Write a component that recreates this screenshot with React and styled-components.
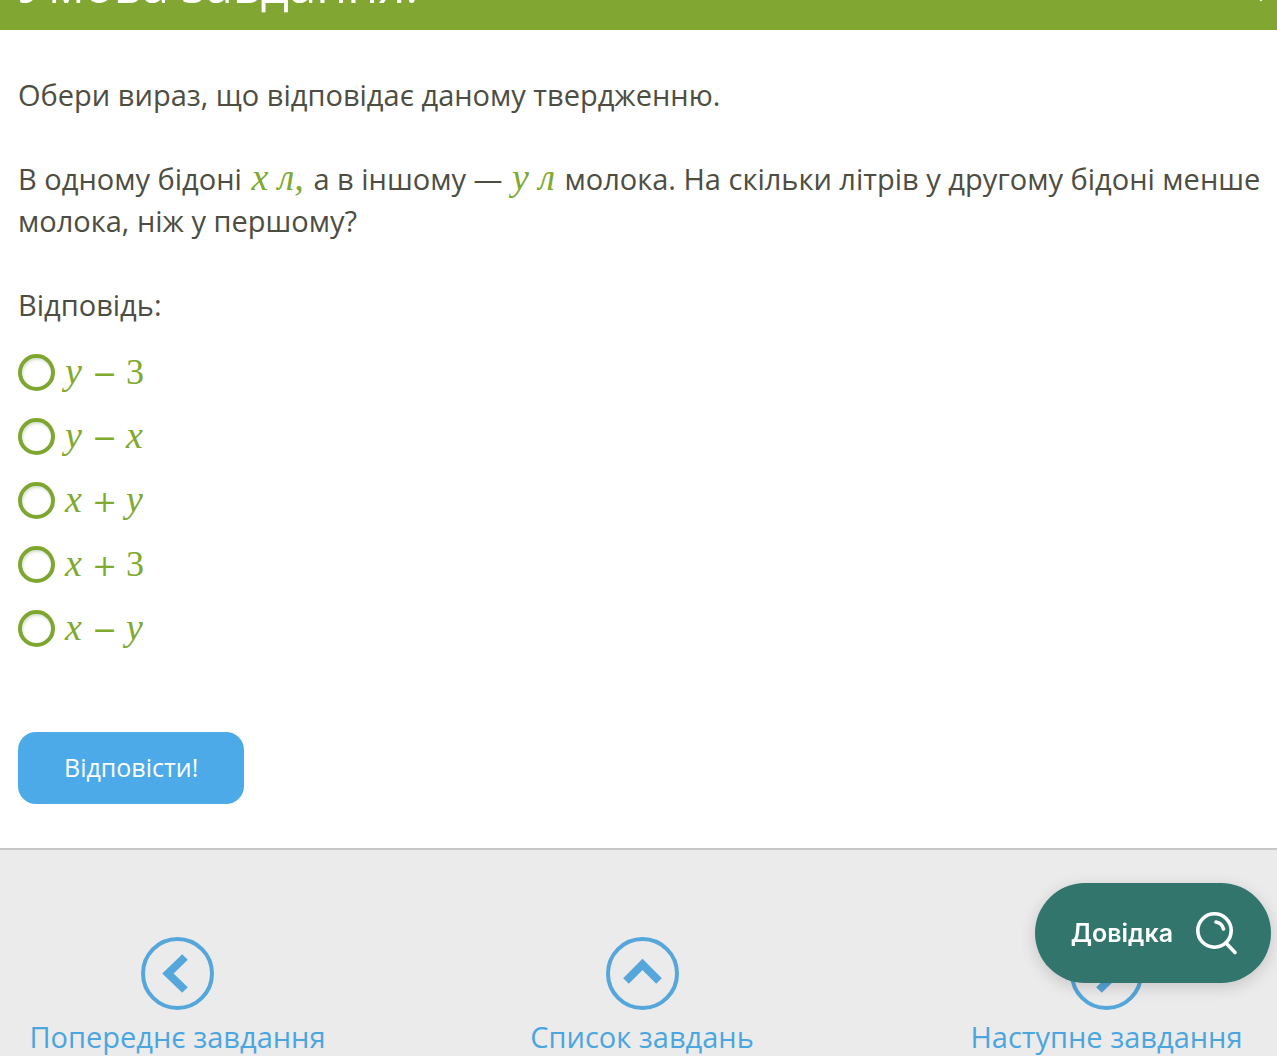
import React, { useState } from "react";
import styled, { createGlobalStyle } from "styled-components";

const ANSWERS = [
  ["y", "−", "3"],
  ["y", "−", "x"],
  ["x", "+", "y"],
  ["x", "+", "3"],
  ["x", "−", "y"],
];

const LINKS = [
  { text: "Попереднє завдання", points: "44,20 27,36.5 44,53" },
  { text: "Список завдань", points: "20,44 36.5,27.5 53,44" },
  { text: "Наступне завдання", points: "29,20 46,36.5 29,53" },
];

const App = () => {
  const [answer, setAnswer] = useState(null);

  return (
    <Page>
      <GlobalStyle />
      <Header>
        <h1>Умова завдання:</h1>
        <svg width="16" height="20" viewBox="0 0 16 20" aria-hidden="true">
          <path d="M2 2 L8 8 L14 2" fill="none" stroke="#fff" strokeWidth="2" />
        </svg>
      </Header>

      <Task>
        <p>Обери вираз, що відповідає даному твердженню.</p>
        <p>
          В одному бідоні <InlineFormula>x л,</InlineFormula> а в іншому —{" "}
          <InlineFormula>y л</InlineFormula> молока. На скільки літрів у
          другому бідоні менше молока, ніж у першому?
        </p>
        <p id="answers">Відповідь:</p>

        <Answers role="radiogroup" aria-labelledby="answers">
          {ANSWERS.map(([left, sign, right], i) => (
            <Answer key={i}>
              <Radio
                type="radio"
                name="answer"
                checked={answer === i}
                onChange={() => setAnswer(i)}
              />
              <Formula>
                {left}
                <Sign>{sign}</Sign>
                {right === "3" ? <Digit>{right}</Digit> : right}
              </Formula>
            </Answer>
          ))}
        </Answers>

        <Submit type="button">Відповісти!</Submit>
      </Task>

      <Footer>
        {LINKS.map(({ text, points }) => (
          <FooterLink href="#" key={text}>
            <svg width="73" height="73" viewBox="0 0 73 73" aria-hidden="true">
              <circle cx="36.5" cy="36.5" r="34.5" strokeWidth="4" />
              <polyline points={points} strokeWidth="8" />
            </svg>
            {text}
          </FooterLink>
        ))}
      </Footer>

      <Help type="button">
        Довідка
        <svg width="44" height="46" viewBox="0 0 44 46" aria-hidden="true">
          <circle cx="19.5" cy="20.5" r="16.7" />
          <path d="M31.5 33.5 L40 42.5 M21 12 Q27 13 28.5 19" />
        </svg>
      </Help>
    </Page>
  );
};

export default App;

const GlobalStyle = createGlobalStyle`
  * {
    box-sizing: border-box;
  }
  body {
    margin: 0;
    background: #fff;
    color: #4d4d42;
    font-family: "Open Sans", "Noto Sans", sans-serif;
    font-size: 29px;
    line-height: 42px;
  }
`;

const Page = styled.div`
  display: flex;
  flex-direction: column;
  min-height: 100vh;
`;
const Header = styled.header`
  display: flex;
  justify-content: space-between;
  align-items: flex-end;
  height: 30px;
  padding: 0 8px 18px 18px;
  overflow: hidden;
  background: #82a632;
  color: #fff;

  h1 {
    margin: 0;
    font-size: 49px;
    font-weight: 400;
    line-height: 56px;
  }
  svg {
    flex: none;
  }
`;
const Task = styled.main`
  flex: 1;
  padding: 44px 12px 44px 18px;

  p {
    margin: 0 0 42px;
  }
  #answers {
    margin-bottom: 14px;
  }
`;
const Formula = styled.span`
  color: #7fa92f;
  font-family: "Liberation Serif", serif;
  font-size: 38px;
  font-style: italic;
  line-height: 36px;
`;
const InlineFormula = styled(Formula)`
  margin: 0 2px;
`;
const Sign = styled.span`
  display: inline-block;
  width: 24px;
  margin: 0 10px;
  font-family: "DejaVu Serif", serif;
  font-size: 30px;
  font-style: normal;
  text-align: center;
`;
const Digit = styled.span`
  font-size: 36px;
  font-style: normal;
`;
const Answers = styled.div`
  display: flex;
  flex-direction: column;
  align-items: flex-start;
`;
const Answer = styled.label`
  display: flex;
  align-items: center;
  gap: 10px;
  height: 64px;
`;
const Radio = styled.input`
  appearance: none;
  width: 37px;
  height: 37px;
  margin: 0;
  border: 4px solid #7fa630;
  border-radius: 50%;
  background: #fff;
  box-shadow: inset 1px 2px 3px #d5e2d5;

  &:checked {
    background: #7fa630;
    box-shadow: inset 0 0 0 6px #fff;
  }
`;
const Submit = styled.button`
  display: block;
  height: 72px;
  margin-top: 72px;
  padding: 0 46px 2px;
  border: 0;
  border-radius: 18px;
  background: #4daae8;
  color: #fff;
  font-family: inherit;
  font-size: 25px;
`;
const Footer = styled.footer`
  display: flex;
  justify-content: space-between;
  padding: 87px 23px 1px 30px;
  border-top: 2px solid #c6c6c6;
  background: #ebebeb;
`;
const FooterLink = styled.a`
  display: flex;
  flex-direction: column;
  align-items: center;
  gap: 9px;
  width: 295px;
  color: #4ba6df;
  line-height: 36px;
  text-decoration: none;
  white-space: nowrap;

  svg {
    fill: none;
    stroke: #55a6da;
  }
`;
const Help = styled.button`
  position: fixed;
  right: 6px;
  bottom: 73px;
  display: flex;
  align-items: center;
  gap: 22px;
  height: 100px;
  padding: 0 32px 0 36px;
  border: 0;
  border-radius: 50px;
  background: #31756d;
  box-shadow: 0 4px 16px rgba(0, 0, 0, 0.16);
  color: #fff;
  font-family: Inter, sans-serif;
  font-size: 25px;
  font-weight: 600;

  svg {
    fill: none;
    stroke: #fff;
    stroke-width: 3.6;
    stroke-linecap: round;
  }
`;
